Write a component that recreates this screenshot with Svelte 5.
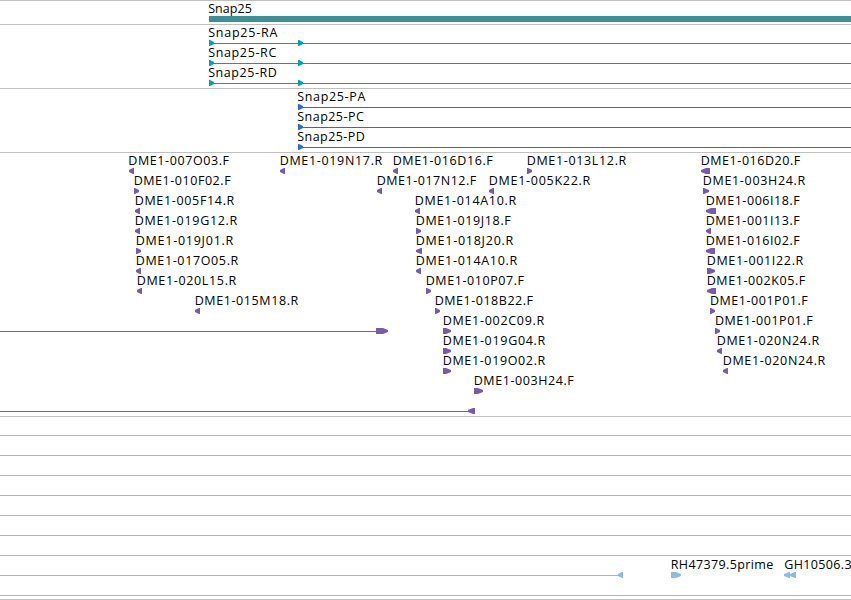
<script>
	const viewWidth = 851;
	const rowHeight = 20;

	// label: [text, ink start, ink end], glyph: [start, end, strand]
	const feature = (row, text, from, to, start, end, strand) => ({
		row,
		text,
		from,
		to,
		start,
		end,
		strand
	});

	const transcripts = [
		feature(0, 'Snap25-RA', 208.7, 277, 209, 214, 1),
		feature(1, 'Snap25-RC', 208.7, 276, 209, 214, 1),
		feature(2, 'Snap25-RD', 208.7, 276.5, 209, 214, 1),
		feature(0, '', 0, 0, 298, 303, 1),
		feature(1, '', 0, 0, 298, 303, 1),
		feature(2, '', 0, 0, 298, 303, 1)
	];

	const proteins = [
		feature(0, 'Snap25-PA', 297.8, 365, 298, 303, 1),
		feature(1, 'Snap25-PC', 297.8, 363.5, 298, 303, 1),
		feature(2, 'Snap25-PD', 297.8, 364.5, 298, 303, 1)
	];

	const reads = [
		feature(0, 'DME1-007O03.F', 129.3, 228.7, 129, 134, -1),
		feature(0, 'DME1-019N17.R', 280.7, 382, 280, 285, -1),
		feature(0, 'DME1-016D16.F', 393.7, 492.5, 393, 398, -1),
		feature(0, 'DME1-013L12.R', 527.7, 626, 527, 532, 1),
		feature(0, 'DME1-016D20.F', 701.7, 800, 701, 710, -1),
		feature(1, 'DME1-010F02.F', 134.7, 230.3, 134, 139, 1),
		feature(1, 'DME1-017N12.F', 377.7, 476, 377, 382, -1),
		feature(1, 'DME1-005K22.R', 489.7, 590, 489, 494, -1),
		feature(1, 'DME1-003H24.R', 703.7, 805, 703, 709, 1),
		feature(2, 'DME1-005F14.R', 135.7, 234, 135, 140, -1),
		feature(2, 'DME1-014A10.R', 415.7, 516, 415, 420, -1),
		feature(2, 'DME1-006I18.F', 706.7, 799.5, 706, 716, -1),
		feature(3, 'DME1-019G12.R', 135.7, 237, 135, 140, -1),
		feature(3, 'DME1-019J18.F', 416.7, 510.5, 416, 421, 1),
		feature(3, 'DME1-001I13.F', 706.7, 799.5, 706, 711, -1),
		feature(4, 'DME1-019J01.R', 136.7, 233, 136, 141, 1),
		feature(4, 'DME1-018J20.R', 416.7, 513, 416, 422, -1),
		feature(4, 'DME1-016I02.F', 706.7, 799.5, 706, 715, -1),
		feature(5, 'DME1-017O05.R', 136.7, 238, 136, 141, -1),
		feature(5, 'DME1-014A10.R', 416.7, 517, 416, 421, -1),
		feature(5, 'DME1-001I22.R', 707.7, 803, 707, 715, 1),
		feature(6, 'DME1-020L15.R', 137.7, 236, 137, 142, -1),
		feature(6, 'DME1-010P07.F', 426.7, 523.7, 426, 431, 1),
		feature(6, 'DME1-002K05.F', 707.7, 805, 707, 716, -1),
		feature(7, 'DME1-015M18.R', 195.7, 298, 195, 200, -1),
		feature(7, 'DME1-018B22.F', 435.7, 532.7, 435, 440, 1),
		feature(7, 'DME1-001P01.F', 710.9, 807.5, 710, 715, 1),
		feature(8, '', 0, 0, 376, 388, 1),
		feature(8, 'DME1-002C09.R', 443.7, 544, 443, 451, 1),
		feature(8, 'DME1-001P01.F', 715.9, 812.5, 715, 720, 1),
		feature(9, 'DME1-019G04.R', 443.7, 545, 443, 451, 1),
		feature(9, 'DME1-020N24.R', 717.7, 819, 717, 722, -1),
		feature(10, 'DME1-019O02.R', 443.7, 545, 443, 451, 1),
		feature(10, 'DME1-020N24.R', 723.7, 825, 723, 728, -1),
		feature(11, 'DME1-003H24.F', 474.7, 573.5, 474, 483, 1),
		feature(12, '', 0, 0, 468, 475, -1)
	];

	const cdnas = [
		feature(7, '', 0, 0, 618, 623, -1),
		feature(7, 'RH47379.5prime', 671.7, 773, 671, 681, 1),
		feature(7, 'GH10506.3', 784.9, 851.3, 784, 790, -1),
		feature(7, '', 0, 0, 790, 796, -1)
	];

	const fullRow = (row) => ({ row, start: 0, end: viewWidth });

	const tracks = [
		{
			name: 'gene',
			height: 24,
			lines: [],
			bars: [{ start: 209, end: viewWidth }],
			features: [feature(0, 'Snap25', 208.7, 251.5, 0, 0, 0)]
		},
		{
			name: 'transcript',
			height: 64,
			lines: [0, 1, 2].map((row) => ({ row, start: 209, end: viewWidth })),
			bars: [],
			features: transcripts
		},
		{
			name: 'protein',
			height: 64,
			lines: [0, 1, 2].map((row) => ({ row, start: 298, end: viewWidth })),
			bars: [],
			features: proteins
		},
		{
			name: 'read',
			height: 264,
			lines: [
				{ row: 8, start: 0, end: 376 },
				{ row: 12, start: 0, end: 469 }
			],
			bars: [],
			features: reads
		},
		{
			name: 'cdna',
			height: 183,
			lines: [...[0, 1, 2, 3, 4, 5, 6, 8].map(fullRow), { row: 7, start: 0, end: 619 }],
			bars: [],
			features: cdnas
		}
	];

	// block with a pointed end on the side of its strand
	function arrow(f) {
		const top = f.row * rowHeight + 16;
		const tip = Math.min(f.end - f.start, 6) - 1;
		const [back, neck, point] =
			f.strand > 0 ? [f.start, f.end - tip, f.end] : [f.end, f.start + tip, f.start];
		return `${back},${top} ${neck},${top} ${point},${top + 2} ${point},${top + 4} ${neck},${top + 6} ${back},${top + 6}`;
	}

	// room the first letter leaves on its left
	const bearing = (text) => (text[0] === 'S' ? 0.5 : text[0] === 'G' ? 0.7 : 1);
</script>

<main>
	{#each tracks as track}
		<section class="track {track.name}">
			<svg width={viewWidth} height={track.height}>
				{#each track.bars as bar}
					<rect x={bar.start} y="16" width={bar.end - bar.start} height="6" />
				{/each}
				{#each track.lines as line}
					<rect
						x={line.start}
						y={line.row * rowHeight + 19}
						width={line.end - line.start}
						height="1"
					/>
				{/each}
				{#each track.features as f}
					{#if f.strand}
						<polygon points={arrow(f)} />
					{/if}
					{#if f.text}
						<text
							x={f.from - bearing(f.text)}
							y={f.row * rowHeight + 13}
							textLength={f.to - f.from + bearing(f.text) + 0.3}>{f.text}</text
						>
					{/if}
				{/each}
			</svg>
		</section>
	{/each}
	<hr />
</main>

<style>
	:global(body) {
		background-color: #ffffff;
	}

	main {
		width: 851px;
		height: 600px;
		overflow: hidden;
	}

	.track {
		box-shadow: inset 0 1px 0 #c0c0c0;
	}

	svg {
		display: block;
	}

	text {
		font-family: 'Open Sans', 'DejaVu Sans', sans-serif;
		font-size: 12.5px;
		fill: #000000;
	}

	hr {
		height: 1px;
		margin: 0;
		border: none;
		background-color: #c0c0c0;
	}

	.gene {
		fill: #3f8f96;
	}

	.transcript {
		fill: #009fc0;
	}

	.protein {
		fill: #2f6ccf;
	}

	.read {
		fill: #785bab;
	}

	.cdna {
		fill: #8bbedd;
	}
</style>
